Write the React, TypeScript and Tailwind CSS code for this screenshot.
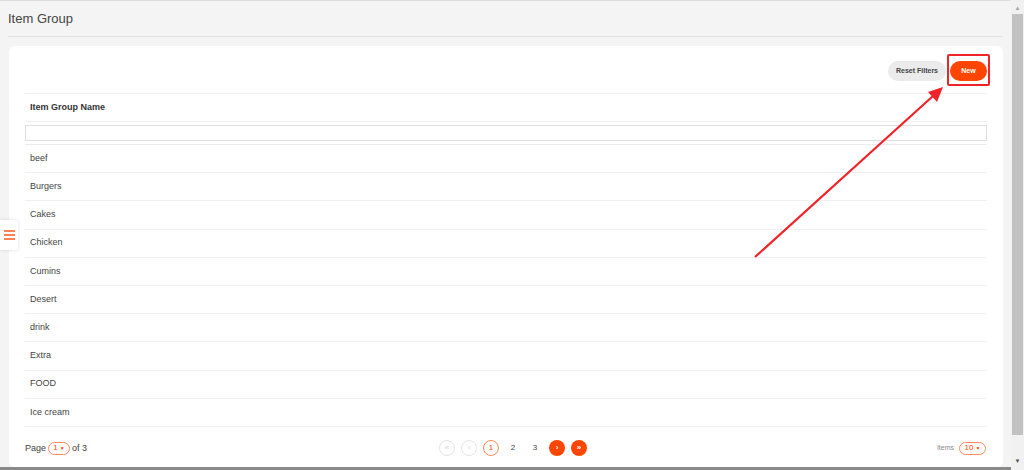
const groups = ['beef', 'Burgers', 'Cakes', 'Chicken', 'Cumins', 'Desert', 'drink', 'Extra', 'FOOD', 'Ice cream'];

export default function App() {
    return (
        <div className="relative flex h-[470px] w-[1024px] overflow-hidden bg-[#f4f4f4] font-['Liberation_Sans',Arial,sans-serif] text-[#444]">
            <div className="flex min-w-0 flex-1 flex-col border-t border-[#dcdcdc]">
                {/* Page header */}
                <div className="mx-2 flex h-[36px] shrink-0 items-center border-b border-[#e2e2e2] text-[13px] text-[#444]">
                    Item Group
                </div>

                {/* Card */}
                <div className="ml-[9px] mr-[8px] mt-[9px] flex flex-1 flex-col rounded-md bg-white px-4 pt-[15px]">
                    <div className="flex h-[20px] items-center justify-end gap-1">
                        <button className="h-[20px] w-[58px] rounded-full bg-[#ebebeb] text-[7px] font-bold text-[#444]">
                            Reset Filters
                        </button>
                        <div className="relative flex">
                            <button className="h-[20px] w-[37px] rounded-full bg-[#ff4500] text-[7px] font-bold text-white">
                                New
                            </button>
                            <div className="absolute -bottom-[5px] -left-[3px] -right-[3px] -top-[7px] rounded-[2px] border-2 border-[#f0222a]" />
                        </div>
                    </div>

                    {/* Table */}
                    <div className="mt-[12px] border-t border-[#f0f0f0]">
                        <div className="flex h-[28px] items-center border-b border-[#f0f0f0] px-[5px] pt-[1px] text-[9px] font-bold text-[#333]">
                            Item Group Name
                        </div>
                        <div className="flex h-[23px] items-center border-b border-[#ececec]">
                            <div className="h-[16px] w-full border border-[#dedede] bg-white" />
                        </div>
                        {groups.map((g) => (
                            <div key={g} className="flex h-[28.2px] items-center border-b border-[#f0f0f0] px-[5px] text-[9px] text-[#444]">
                                {g}
                            </div>
                        ))}
                    </div>

                    {/* Footer */}
                    <div className="flex flex-1 items-center justify-between pt-[3px] text-[9px]">
                        <div className="flex w-[120px] items-center gap-[2px] text-[#444]">
                            <span>Page</span>
                            <span className="flex h-[13px] w-[22px] items-center justify-center gap-[2px] rounded-full border border-[#ff8a5c] text-[8px] text-[#ff4500]">
                                1<span className="text-[5px]">▼</span>
                            </span>
                            <span>of 3</span>
                        </div>
                        <div className="ml-[14px] flex items-center gap-[6px]">
                            <PageBtn kind="disabled">«</PageBtn>
                            <PageBtn kind="disabled">‹</PageBtn>
                            <PageBtn kind="current">1</PageBtn>
                            <PageBtn kind="plain">2</PageBtn>
                            <PageBtn kind="plain">3</PageBtn>
                            <PageBtn kind="filled">›</PageBtn>
                            <PageBtn kind="filled">»</PageBtn>
                        </div>
                        <div className="flex w-[120px] items-center justify-end gap-[5px] pr-[1px]">
                            <span className="text-[7px] text-[#888]">Items</span>
                            <span className="flex h-[13px] w-[27px] items-center justify-center gap-[2px] rounded-full border border-[#ff8a5c] text-[8px] text-[#ff4500]">
                                10<span className="text-[5px]">▼</span>
                            </span>
                        </div>
                    </div>
                </div>
                <div className="h-[3px] shrink-0 bg-[#8a8a8a]" />
            </div>

            {/* Scrollbar */}
            <div className="flex w-[13px] shrink-0 flex-col items-center bg-[#f1f1f1]">
                <span className="mt-[3px] h-[11px] text-[6px] leading-[11px] text-[#a3a3a3]">▲</span>
                <div className="h-[421px] w-[11px] bg-[#c1c1c1]" />
                <span className="mt-auto mb-[3px] text-[6px] leading-[11px] text-[#505050]">▼</span>
            </div>

            {/* Sidebar toggle */}
            <div className="absolute left-0 top-[220px] flex h-[30px] w-[18px] items-center justify-center rounded-r-[3px] bg-white shadow-[0_0_4px_rgba(0,0,0,0.12)]">
                <svg width="11" height="10" viewBox="0 0 11 10">
                    <path d="M0 1H11M0 5H11M0 9H11" stroke="#ff5a1f" strokeWidth="1.3" />
                </svg>
            </div>

            {/* Annotation arrow */}
            <svg className="pointer-events-none absolute left-0 top-0" width="1024" height="470">
                <line x1="755" y1="257" x2="933" y2="96" stroke="#f0222a" strokeWidth="2.2" />
                <polygon points="943,87 928,92 937,102" fill="#f0222a" />
            </svg>
        </div>
    );
}

function PageBtn({ kind, children }: { kind: 'disabled' | 'current' | 'plain' | 'filled'; children: React.ReactNode }) {
    const cls = {
        disabled: 'border border-[#e4e4e4] text-[#d0d0d0]',
        current: 'border border-[#ff8a5c] text-[#ff4500]',
        plain: 'text-[#444]',
        filled: 'bg-[#ff4500] text-white font-bold',
    }[kind];
    return (
        <span className={'flex h-4 w-4 items-center justify-center rounded-full text-[8px] leading-none ' + cls}>
            {children}
        </span>
    );
}
